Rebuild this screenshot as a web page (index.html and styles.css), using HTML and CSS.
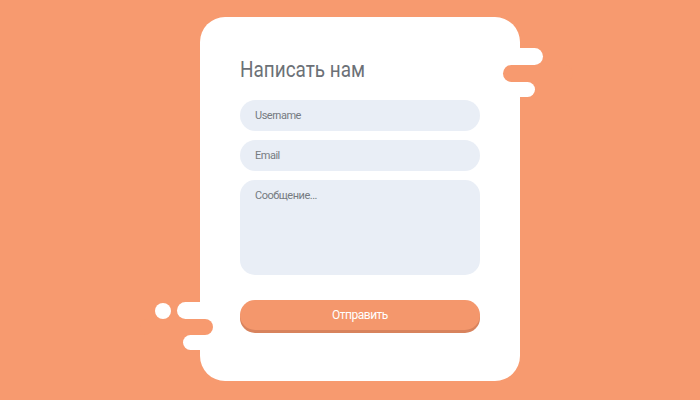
FILE: index.html
```html
<!DOCTYPE html>
<html lang="ru">
<head>
<meta charset="utf-8">
<title>Написать нам</title>
<link rel="stylesheet" href="styles.css">
</head>
<body>
<div class="card">
  <span class="blob blob-r1"></span>
  <span class="blob blob-r2"></span>
  <span class="cut cut-r"></span>
  <span class="blob blob-dot"></span>
  <span class="blob blob-l1"></span>
  <span class="blob blob-l2"></span>
  <span class="cut cut-l"></span>
  <h1 class="title">Написать нам</h1>
  <form class="form">
    <input class="field" type="text" placeholder="Username">
    <input class="field" type="text" placeholder="Email">
    <textarea class="field area" placeholder="Сообщение..."></textarea>
    <button class="send" type="button">Отправить</button>
  </form>
</div>
</body>
</html>
```
FILE: styles.css
```css
html, body {
  margin: 0;
  padding: 0;
  height: 100%;
}
body {
  background: #f79a6f;
  font-family: Roboto, "Noto Sans", sans-serif;
  overflow: hidden;
}
.card {
  position: relative;
  box-sizing: border-box;
  width: 320px;
  height: 364px;
  margin: 17px 0 0 200px;
  padding: 40px 40px 0 40px;
  background: #ffffff;
  border-radius: 25px;
}
.blob, .cut {
  position: absolute;
  display: block;
}
.blob { background: #ffffff; }
.cut { background: #f79a6f; }
.blob-r1 { left: 290px; top: 31px; width: 53px; height: 17px; border-radius: 9px; }
.blob-r2 { left: 290px; top: 65px; width: 45px; height: 15px; border-radius: 8px; }
.cut-r { left: 303px; top: 48px; width: 70px; height: 17px; border-radius: 9px; }
.blob-dot { left: -45px; top: 286px; width: 16px; height: 16px; border-radius: 50%; }
.blob-l1 { left: -23px; top: 285px; width: 45px; height: 17px; border-radius: 9px; }
.blob-l2 { left: -17px; top: 318px; width: 40px; height: 15px; border-radius: 8px; }
.cut-l { left: -60px; top: 302px; width: 73px; height: 16px; border-radius: 8px; }
.title {
  margin: 0;
  font-size: 22px;
  line-height: 26px;
  font-weight: 400;
  color: #6c7177;
  transform: scaleX(0.86);
  transform-origin: left center;
  white-space: nowrap;
}
.form {
  display: flex;
  flex-direction: column;
  gap: 9px;
  margin-top: 17px;
}
.field {
  box-sizing: border-box;
  width: 240px;
  height: 31px;
  margin: 0;
  padding: 0 15px;
  border: none;
  border-radius: 16px;
  background: #e9eef6;
  font-family: Roboto, "Noto Sans", sans-serif;
  font-size: 11px;
  letter-spacing: -0.5px;
  color: #6f747a;
  outline: none;
}
.field::placeholder { color: #767b81; }
.area {
  height: 95px;
  padding: 9px 15px;
  border-radius: 15px;
  resize: none;
}
.send {
  box-sizing: border-box;
  width: 240px;
  height: 30px;
  margin-top: 16px;
  padding: 0;
  border: none;
  border-radius: 15px;
  background: #f4976c;
  box-shadow: 0 3px 0 #d8835d;
  color: #ffffff;
  font-family: Roboto, "Noto Sans", sans-serif;
  font-size: 12px;
  letter-spacing: -0.5px;
}
```
